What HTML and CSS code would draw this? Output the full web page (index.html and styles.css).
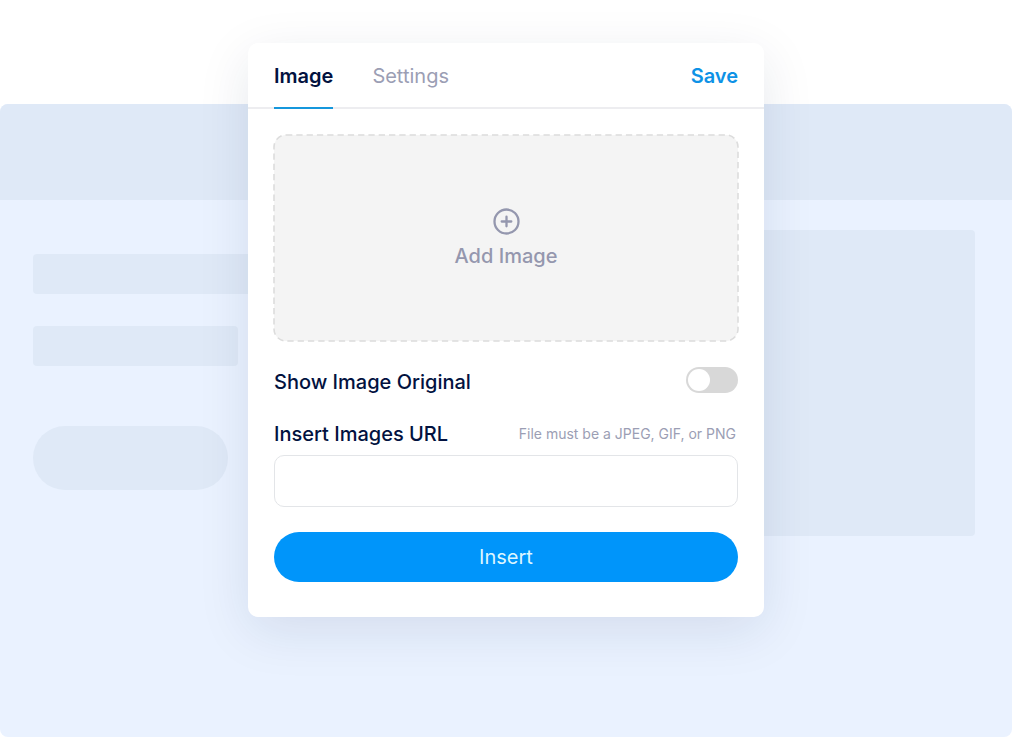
FILE: index.html
```
<!DOCTYPE html>
<html lang="en">
<head>
  <meta charset="UTF-8" />
  <title>Image</title>
  <meta name="viewport" content="width=device-width, initial-scale=1" />
  <link rel="stylesheet" href="styles.css">
</head>
<body>
  <div class="stage">
    <!-- Page skeleton behind the dialog -->
    <div class="page-preview" aria-hidden="true">
      <div class="preview-header"></div>
      <div class="preview-body">
        <div class="preview-text">
          <div class="bar bar-title"></div>
          <div class="bar bar-subtitle"></div>
          <div class="bar bar-button"></div>
        </div>
        <div class="preview-image"></div>
      </div>
    </div>

    <main class="dialog">
      <header class="dialog-header">
        <div class="tabs" role="tablist">
          <button type="button" class="tab active" role="tab" aria-selected="true">Image</button>
          <button type="button" class="tab" role="tab" aria-selected="false">Settings</button>
        </div>
        <button type="submit" form="imageForm" class="save-button">Save</button>
      </header>

      <form class="dialog-body" id="imageForm">
        <button type="button" class="add-image">
          <svg class="dashes" width="100%" height="100%" aria-hidden="true">
            <rect x="0" y="0" width="100%" height="100%" rx="12" />
          </svg>
          <svg class="add-icon" viewBox="0 0 28 28" fill="none" stroke="currentColor" stroke-width="2.3" stroke-linecap="round" aria-hidden="true">
            <circle cx="14.5" cy="13.5" r="12" />
            <path d="M14.5 8.7v9.6M9.7 13.5h9.6" />
          </svg>
          <span>Add Image</span>
        </button>

        <div class="row switch-row">
          <label for="showOriginal">Show Image Original</label>
          <input type="checkbox" class="switch" id="showOriginal" />
        </div>

        <div class="row url-row">
          <label for="imageUrl">Insert Images URL</label>
          <span class="hint" id="urlHint">File must be a JPEG, GIF, or PNG</span>
        </div>
        <input type="text" class="url-input" id="imageUrl" aria-describedby="urlHint" />

        <button type="button" class="insert-button">Insert</button>
      </form>
    </main>
  </div>
</body>
</html>
```
FILE: styles.css
```
* {
  box-sizing: border-box;
}

body {
  font-family: Inter, "Liberation Sans", sans-serif;
  font-size: 20px;
  line-height: 24px;
  color: #02123f;
  background: white;
  margin: 0;
}

button,
input {
  font: inherit;
}

button {
  padding: 0;
  border: none;
  background: none;
  cursor: pointer;
}

/* Skeleton and dialog share one cell */
.stage {
  display: grid;
  grid-template-columns: 100%;
  min-height: 100vh;
}

.page-preview,
.dialog {
  grid-area: 1 / 1;
}

.page-preview {
  display: flex;
  flex-direction: column;
  margin-top: 104px;
  border-radius: 8px;
  background: #eaf2ff;
  overflow: hidden;
}

.preview-header {
  height: 96px;
  background: #dfe9f7;
}

.preview-body {
  display: grid;
  grid-template-columns: 1fr 1fr;
  gap: 32px;
  padding: 30px 37px 0 33px;
}

.preview-text {
  display: flex;
  flex-direction: column;
  gap: 32px;
  padding-top: 24px;
}

.bar {
  height: 40px;
  border-radius: 4px;
  background: #dfe9f7;
}

.bar-subtitle {
  width: 205px;
}

.bar-button {
  width: 195px;
  height: 64px;
  margin-top: 28px;
  border-radius: 32px;
}

.preview-image {
  height: 306px;
  border-radius: 4px;
  background: #dfe9f7;
}

.dialog {
  justify-self: center;
  align-self: start;
  width: 100%;
  max-width: 516px;
  margin: 43px 0;
  border-radius: 10px;
  background: white;
  box-shadow: 0 14px 52px rgba(20, 40, 80, 0.1);
}

.dialog-header {
  display: flex;
  justify-content: space-between;
  padding: 0 26px;
  border-bottom: 2px solid #ededf0;
}

.tabs {
  display: flex;
  gap: 39px;
}

.tab {
  height: 66px;
  margin-bottom: -2px;
  padding-top: 2px;
  border-bottom: 2px solid transparent;
  color: #9b9eb4;
}

.tab.active {
  border-color: #1597dc;
  color: #02123f;
  font-weight: 600;
}

.save-button {
  padding-top: 2px;
  color: #0e92e6;
  font-weight: 600;
}

.dialog-body {
  display: flex;
  flex-direction: column;
  padding: 26px 26px 35px;
}

.add-image {
  position: relative;
  display: flex;
  flex-direction: column;
  align-items: center;
  justify-content: center;
  gap: 8px;
  height: 206px;
  border-radius: 12px;
  background: #f4f4f4;
  color: #9497ae;
  font-weight: 500;
}

/* Dashed outline drawn over the box edge */
.dashes {
  position: absolute;
  inset: 0;
  overflow: visible;
  fill: none;
  stroke: #dcdcdc;
  stroke-width: 1.6;
  stroke-dasharray: 6.3 4;
}

.add-icon {
  width: 28px;
  height: 28px;
}

.row {
  display: flex;
  justify-content: space-between;
  align-items: center;
  font-weight: 500;
}

.switch-row {
  margin-top: 25px;
}

.switch-row label {
  padding-top: 4px;
}

.switch {
  appearance: none;
  display: flex;
  width: 52px;
  height: 26px;
  margin: 0;
  padding: 2px;
  border-radius: 13px;
  background: #d8d8d8;
  cursor: pointer;
}

.switch::before {
  content: "";
  width: 22px;
  height: 22px;
  border-radius: 50%;
  background: white;
}

.switch:checked {
  justify-content: flex-end;
  background: #0095fa;
}

.url-row {
  margin-top: 28px;
}

.hint {
  padding-right: 2px;
  color: #9b9eb4;
  font-size: 14px;
  font-weight: 400;
}

.url-input {
  width: 100%;
  height: 52px;
  margin-top: 9px;
  padding: 0 16px;
  border: 1px solid #e3e5e8;
  border-radius: 10px;
}

.insert-button {
  height: 50px;
  margin-top: 25px;
  border-radius: 25px;
  background: #0095fa;
  color: #dcf6ff;
}
```
